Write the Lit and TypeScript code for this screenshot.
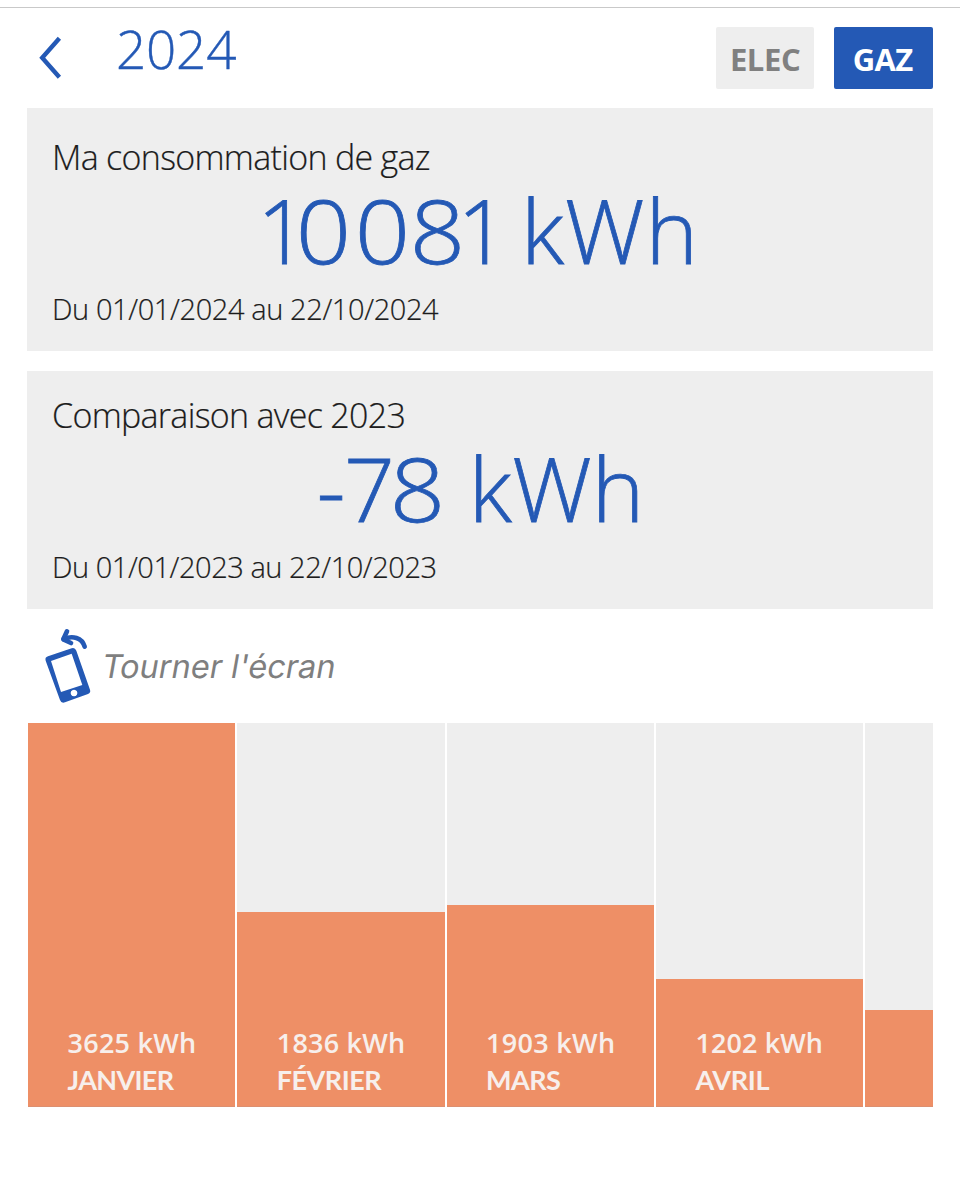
import { LitElement, html, css } from "lit";
import { customElement, property } from "lit/decorators.js";
import { classMap } from "lit/directives/class-map.js";
import { styleMap } from "lit/directives/style-map.js";

interface Month {
  name: string;
  kwh: number;
  labelled: boolean;
  spacing: number[];
}

const MONTHS: Month[] = [
  { name: "JANVIER", kwh: 3625, labelled: true, spacing: [0.25, -0.65] },
  { name: "FÉVRIER", kwh: 1836, labelled: true, spacing: [0.2, -0.5] },
  { name: "MARS", kwh: 1903, labelled: true, spacing: [0.3, -0.6] },
  { name: "AVRIL", kwh: 1202, labelled: true, spacing: [0.1, -0.3] },
  { name: "MAI", kwh: 910, labelled: false, spacing: [0, 0] },
];

@customElement("conso-card")
export class ConsoCard extends LitElement {
  @property() heading = "";
  @property() value = "";
  @property() period = "";
  @property({ attribute: false }) kerning: number[] = [];

  static styles = css`
    :host {
      display: block;
      box-sizing: border-box;
      background: #eeeeee;
      padding: 29px 25px 0;
      font-family: "Open Sans", "Noto Sans", sans-serif;
      font-weight: 300;
      color: #1c1c1c;
      white-space: nowrap;
    }
    .heading {
      font-size: 34px;
      line-height: 40px;
      letter-spacing: -0.7px;
      -webkit-text-stroke: 0.2px currentColor;
    }
    .value {
      margin-top: 8px;
      padding-left: var(--value-inset-start, 0);
      padding-right: var(--value-inset-end, 0);
      font-size: 89px;
      line-height: 90px;
      text-align: center;
      white-space: pre;
      color: #2459b5;
      -webkit-text-stroke: 0.8px currentColor;
    }
    .wide {
      display: inline-block;
      transform: scaleX(1.09);
      transform-origin: 25.4px 50%;
    }
    .period {
      margin-top: 19px;
      font-size: 29px;
      line-height: 30px;
      letter-spacing: var(--period-spacing, -0.46px);
      -webkit-text-stroke: 0.2px currentColor;
    }
  `;

  render() {
    return html`
      <div class="heading">${this.heading}</div>
      <div class="value">${[...this.value].map(
        (ch, i) => html`<span
          class=${classMap({ wide: ch === "0" || ch === "8" })}
          style=${styleMap({ letterSpacing: `${this.kerning[i] ?? 0}px` })}
        >${ch}</span>`
      )}</div>
      <div class="period">${this.period}</div>
    `;
  }
}

@customElement("month-chart")
export class MonthChart extends LitElement {
  static styles = css`
    :host {
      display: flex;
      gap: 2px;
      height: 384px;
      overflow: hidden;
      font-family: "Open Sans", "Noto Sans", sans-serif;
      font-weight: 600;
      font-size: 27px;
      line-height: 37px;
      color: #f7efec;
    }
    .column {
      flex: 0 0 207.3px;
      display: flex;
      flex-direction: column;
      justify-content: flex-end;
      background: #eeeeee;
    }
    .bar {
      box-sizing: border-box;
      display: flex;
      flex-direction: column;
      justify-content: flex-end;
      background: #ee8f66;
      border-bottom: 1px solid #dc8f70;
      padding: 0 0 8px 39.5px;
      white-space: nowrap;
    }
    .month {
      font-family: Lato, "Open Sans", sans-serif;
      font-weight: 700;
    }
  `;

  render() {
    const max = Math.max(...MONTHS.map((m) => m.kwh));
    return MONTHS.map(
      (m) => html`
        <div class="column">
          <div class="bar" style=${styleMap({ height: `${(m.kwh / max) * 100}%` })}>
            ${m.labelled
              ? html`
                  <span style=${styleMap({ letterSpacing: `${m.spacing[0]}px` })}>${m.kwh} kWh</span>
                  <span class="month" style=${styleMap({ letterSpacing: `${m.spacing[1]}px` })}>${m.name}</span>
                `
              : ""}
          </div>
        </div>
      `
    );
  }
}

@customElement("app-root")
export class AppRoot extends LitElement {
  static styles = css`
    :host {
      display: block;
      box-sizing: border-box;
      height: 1200px;
      padding: 7px 0 0;
      background: #ffffff;
      font-family: "Open Sans", "Noto Sans", sans-serif;
      overflow: hidden;
    }
    .page {
      border-top: 1px solid #c9c9c9;
      padding: 0 27px;
    }
    .header {
      display: flex;
      align-items: flex-start;
      height: 100px;
    }
    .back {
      display: block;
      margin: 28px 0 0 11px;
    }
    .year {
      margin: 11px auto 0 52px;
      font-size: 53px;
      line-height: 60px;
      font-weight: 300;
      letter-spacing: -0.2px;
      color: #2459b5;
      -webkit-text-stroke: 0.4px currentColor;
    }
    .tab {
      box-sizing: border-box;
      width: 98.6px;
      height: 61.5px;
      margin: 19px 0 0 20px;
      padding-top: 1px;
      border-radius: 2px;
      font-size: 31px;
      line-height: 63px;
      font-weight: 700;
      text-align: center;
      background: #eeeeee;
      color: #808080;
      letter-spacing: -0.4px;
    }
    .tab.active {
      padding-right: 2px;
      background: #2459b5;
      color: #ffffff;
      letter-spacing: -0.7px;
    }
    .first {
      height: 243px;
      --value-inset-end: 5px;
      --period-spacing: -0.4px;
    }
    .second {
      height: 238px;
      margin-top: 20px;
      padding-top: 24px;
      --value-inset-start: 1px;
    }
    .rotate {
      display: flex;
      height: 113.5px;
    }
    .rotate svg {
      margin: 16px 0 0 13px;
    }
    .hint {
      margin: 38px 0 0 5px;
      font-family: Inter, "Liberation Sans", sans-serif;
      font-size: 32.5px;
      line-height: 40px;
      letter-spacing: 0;
      color: #7f7f7f;
      height: 40px;
      transform: skewX(-10deg);
      transform-origin: 0 32px;
    }
    .chart {
      margin-left: 1px;
    }
  `;

  render() {
    return html`
      <div class="page">
        <div class="header">
          <svg class="back" width="26" height="44" viewBox="0 0 26 44" fill="none" stroke="#2459b5" stroke-width="4.4">
            <path d="M21.4 2.2 L4.2 21.7 L21.4 41.2" />
          </svg>
          <div class="year">2024</div>
          <div class="tab">ELEC</div>
          <div class="tab active">GAZ</div>
        </div>
        <conso-card
          class="first"
          heading="Ma consommation de gaz"
          value="10081 kWh"
          .kerning=${[-9.7, 7.8, 4.4, -5.6, -5.1, -5.1, 1, 1, 0]}
          period="Du 01/01/2024 au 22/10/2024"
        ></conso-card>
        <conso-card
          class="second"
          heading="Comparaison avec 2023"
          value="-78 kWh"
          .kerning=${[-1.5, -3, 0, 3, 0.5, 0, 0]}
          period="Du 01/01/2023 au 22/10/2023"
        ></conso-card>
        <div class="rotate">
          <svg width="55" height="80" viewBox="60 15 165 240">
            <path
              fill="#2459b5"
              fill-rule="evenodd"
              d="M84 109 L155 85 Q165 82 169 92 L210 209 Q213 218 204 222 L135 247 Q124 251 120 240 L77 122 Q74 112 84 109 Z M93 123 L123 216 L187 195 L155 101 Z M162 209 a10 10 0 1 0 0.1 0 Z"
            />
            <g fill="none" stroke="#2459b5" stroke-linecap="round" stroke-linejoin="round" stroke-width="14">
              <path d="M141 34 L130 58 L153 69" />
              <path d="M131 57 C157 46 186 52 194 80" />
            </g>
          </svg>
          <div class="hint">Tourner l'écran</div>
        </div>
        <month-chart class="chart"></month-chart>
      </div>
    `;
  }
}
